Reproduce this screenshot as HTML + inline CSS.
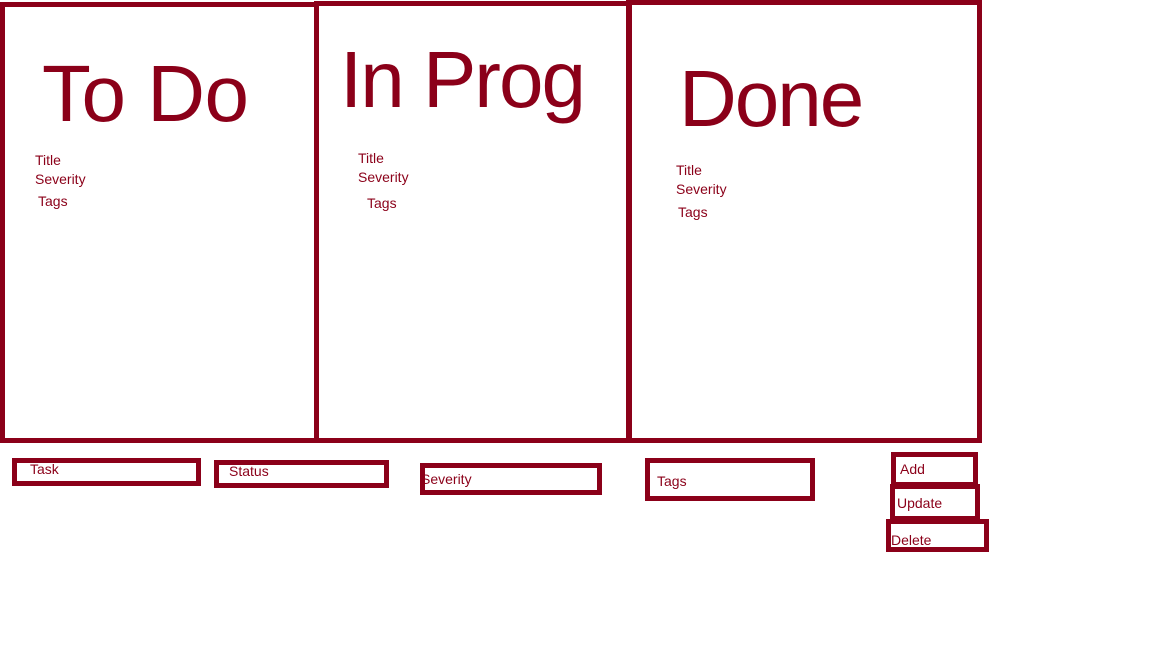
<!DOCTYPE html>
<html><head><style>
body{margin:0;width:1152px;height:648px;background:#fff;position:relative;overflow:hidden;font-family:"Liberation Sans",sans-serif;color:#8b0019}
.b{position:absolute;border:5px solid #8b0019;box-sizing:border-box}
.t{position:absolute;white-space:nowrap;line-height:1}
.big{font-size:80px}
.s{font-size:14px}
</style></head><body>
<div class="b" style="left:0;top:2px;width:319px;height:441px"></div>
<div class="b" style="left:314px;top:1px;width:318px;height:442px"></div>
<div class="b" style="left:626px;top:0;width:356px;height:443px"></div>

<div class="t big" style="left:42px;top:54px;letter-spacing:-0.5px">To Do</div>
<div class="t big" style="left:340px;top:40px;letter-spacing:-2px">In Prog</div>
<div class="t big" style="left:679px;top:59px;letter-spacing:-2px">Done</div>

<div class="t s" style="left:35px;top:153px">Title</div>
<div class="t s" style="left:35px;top:172px">Severity</div>
<div class="t s" style="left:38px;top:194px">Tags</div>

<div class="t s" style="left:358px;top:151px">Title</div>
<div class="t s" style="left:358px;top:170px">Severity</div>
<div class="t s" style="left:367px;top:196px">Tags</div>

<div class="t s" style="left:676px;top:163px">Title</div>
<div class="t s" style="left:676px;top:182px">Severity</div>
<div class="t s" style="left:678px;top:205px">Tags</div>

<div class="b" style="left:12px;top:458px;width:189px;height:28px"></div>
<div class="t s" style="left:30px;top:462px">Task</div>
<div class="b" style="left:214px;top:460px;width:175px;height:28px"></div>
<div class="t s" style="left:229px;top:464px">Status</div>
<div class="b" style="left:420px;top:463px;width:182px;height:32px"></div>
<div class="t s" style="left:421px;top:472px">Severity</div>
<div class="b" style="left:645px;top:458px;width:170px;height:43px"></div>
<div class="t s" style="left:657px;top:474px">Tags</div>
<div class="b" style="left:891px;top:452px;width:87px;height:35px"></div>
<div class="t s" style="left:900px;top:462px">Add</div>
<div class="b" style="left:890px;top:484px;width:90px;height:37px"></div>
<div class="t s" style="left:897px;top:496px">Update</div>
<div class="b" style="left:886px;top:519px;width:103px;height:33px"></div>
<div class="t s" style="left:891px;top:533px">Delete</div>
</body></html>
